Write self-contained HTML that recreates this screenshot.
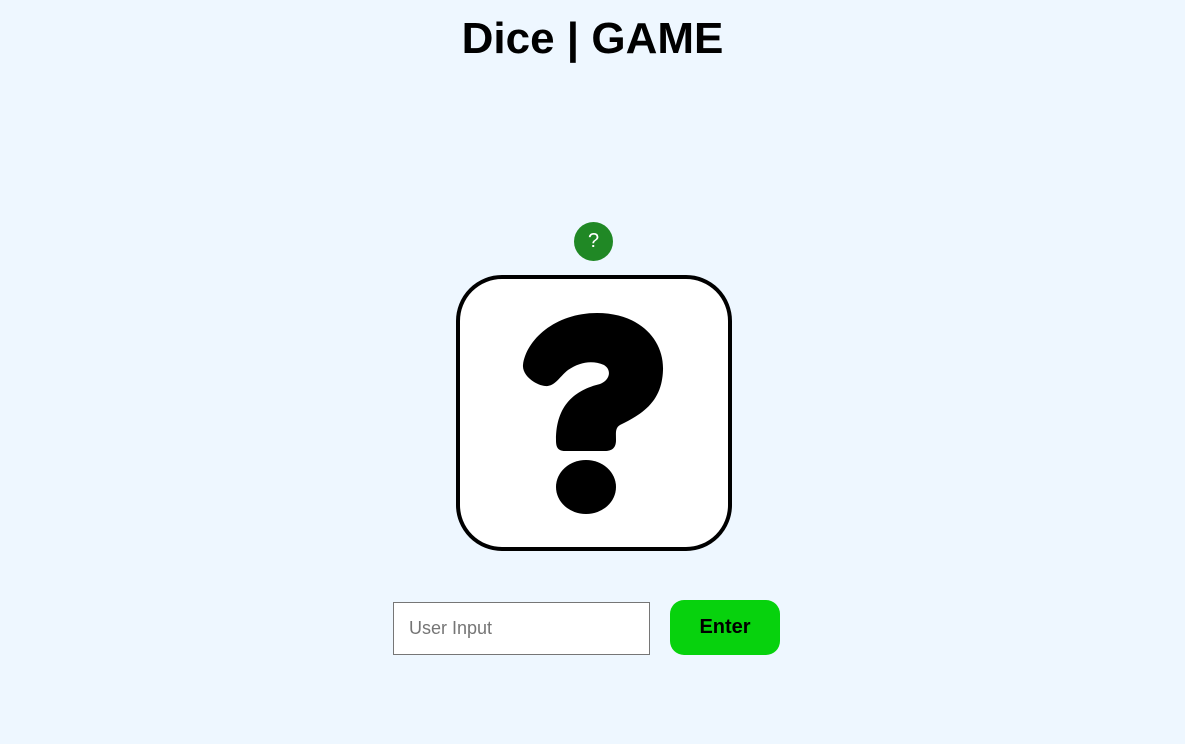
<!DOCTYPE html>
<html><head><meta charset="utf-8"><style>
html,body{margin:0;padding:0;width:1185px;height:744px;background:#eef7ff;font-family:"Liberation Sans",sans-serif;overflow:hidden;position:relative}
h1{position:absolute;top:14px;left:0;width:1185px;text-align:center;margin:0;font-size:44px;font-weight:bold;color:#000}
.badge{position:absolute;left:574px;top:222px;width:39px;height:39px;border-radius:50%;background:#208825;color:#fff;font-size:20px;text-align:center;line-height:39px}
.box{position:absolute;left:456px;top:275px;width:268px;height:268px;border:4px solid #000;border-radius:46px;background:#fff}
svg{position:absolute;left:0;top:0}
input{position:absolute;left:393px;top:602px;width:257px;height:53px;box-sizing:border-box;border:1px solid #767676;background:#fff;padding:0 15px;font-size:18px;font-family:"Liberation Sans",sans-serif}
input::placeholder{color:#757575}
.btn{position:absolute;left:670px;top:600px;width:110px;height:55px;border-radius:14px;background:#07d20d;font-weight:bold;font-size:20px;text-align:center;line-height:55px;color:#000}
</style></head><body>
<h1>Dice | GAME</h1>
<div class="badge">?</div>
<div class="box"></div>
<svg width="1185" height="744"><path d="M545 386 C535 385 522 375 523 365 C526 340 555 313 597 313 C640 313 664 340 663 370 C662 400 645 413 620 425 C615 428 616 433 616 440 C616 448 612 451 605 451 L565 451 C557 451 556 446 556 440 C556 405 575 390 600 384 C610 380 612 370 604 365 C592 360 580 362 568 370 C560 376 555 387 545 386 Z" fill="#000"/><ellipse cx="586" cy="487" rx="30" ry="27" fill="#000"/></svg>
<input placeholder="User Input">
<div class="btn">Enter</div>
</body></html>
